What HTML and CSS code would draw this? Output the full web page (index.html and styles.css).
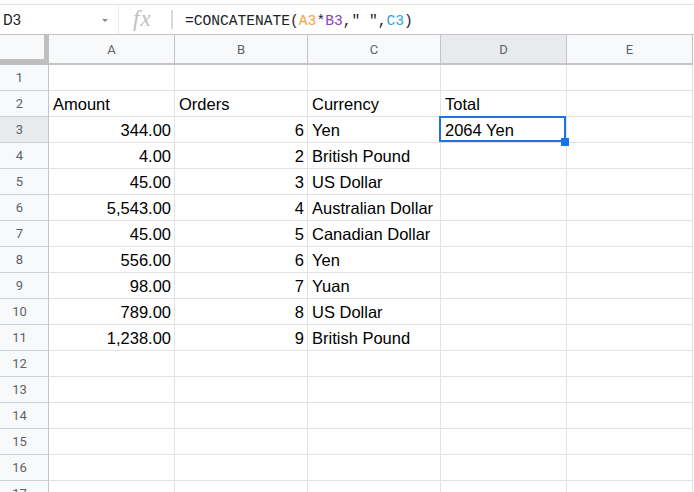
FILE: index.html
```html
<!DOCTYPE html>
<html>
<head>
<meta charset="utf-8">
<link rel="stylesheet" href="styles.css">
</head>
<body>
<div class="fbar">
  <div class="namebox"><span class="ref">D3</span><span class="caret"></span></div>
  <div class="fxbox"><span class="fx">fx</span></div>
  <div class="divider"></div>
  <div class="formula">=CONCATENATE(<span class="r1">A3</span>*<span class="r2">B3</span>," ",<span class="r3">C3</span>)</div>
</div>
<div class="sheet">
  <div class="row head">
    <div class="corner"></div>
    <div class="ch">A</div><div class="ch">B</div><div class="ch">C</div><div class="ch hl">D</div><div class="ch">E</div>
  </div>
  <div class="row"><div class="rh">1</div><div class="c"></div><div class="c"></div><div class="c"></div><div class="c"></div><div class="c"></div></div>
  <div class="row"><div class="rh">2</div><div class="c">Amount</div><div class="c">Orders</div><div class="c">Currency</div><div class="c">Total</div><div class="c"></div></div>
  <div class="row"><div class="rh hl">3</div><div class="c n">344.00</div><div class="c n">6</div><div class="c">Yen</div><div class="c sel">2064 Yen<span class="selbox"></span><span class="handle"></span></div><div class="c"></div></div>
  <div class="row"><div class="rh">4</div><div class="c n">4.00</div><div class="c n">2</div><div class="c">British Pound</div><div class="c"></div><div class="c"></div></div>
  <div class="row"><div class="rh">5</div><div class="c n">45.00</div><div class="c n">3</div><div class="c">US Dollar</div><div class="c"></div><div class="c"></div></div>
  <div class="row"><div class="rh">6</div><div class="c n">5,543.00</div><div class="c n">4</div><div class="c">Australian Dollar</div><div class="c"></div><div class="c"></div></div>
  <div class="row"><div class="rh">7</div><div class="c n">45.00</div><div class="c n">5</div><div class="c">Canadian Dollar</div><div class="c"></div><div class="c"></div></div>
  <div class="row"><div class="rh">8</div><div class="c n">556.00</div><div class="c n">6</div><div class="c">Yen</div><div class="c"></div><div class="c"></div></div>
  <div class="row"><div class="rh">9</div><div class="c n">98.00</div><div class="c n">7</div><div class="c">Yuan</div><div class="c"></div><div class="c"></div></div>
  <div class="row"><div class="rh">10</div><div class="c n">789.00</div><div class="c n">8</div><div class="c">US Dollar</div><div class="c"></div><div class="c"></div></div>
  <div class="row"><div class="rh">11</div><div class="c n">1,238.00</div><div class="c n">9</div><div class="c">British Pound</div><div class="c"></div><div class="c"></div></div>
  <div class="row"><div class="rh">12</div><div class="c"></div><div class="c"></div><div class="c"></div><div class="c"></div><div class="c"></div></div>
  <div class="row"><div class="rh">13</div><div class="c"></div><div class="c"></div><div class="c"></div><div class="c"></div><div class="c"></div></div>
  <div class="row"><div class="rh">14</div><div class="c"></div><div class="c"></div><div class="c"></div><div class="c"></div><div class="c"></div></div>
  <div class="row"><div class="rh">15</div><div class="c"></div><div class="c"></div><div class="c"></div><div class="c"></div><div class="c"></div></div>
  <div class="row"><div class="rh">16</div><div class="c"></div><div class="c"></div><div class="c"></div><div class="c"></div><div class="c"></div></div>
  <div class="row"><div class="rh">17</div><div class="c"></div><div class="c"></div><div class="c"></div><div class="c"></div><div class="c"></div></div>
</div>
</body>
</html>
```
FILE: styles.css
```css
html, body {
  margin: 0;
  padding: 0;
  background: #fff;
}
body {
  width: 694px;
  height: 492px;
  overflow: hidden;
}
.fbar {
  margin-top: 4px;
  border-top: 1px solid #e3e3e3;
  height: 29px;
  display: flex;
  align-items: stretch;
}
.namebox {
  width: 119px;
  border-right: 1px solid #ececec;
  display: flex;
  align-items: flex-start;
  justify-content: space-between;
  padding: 3px 10px 0 3px;
  box-sizing: border-box;
}
.ref {
  font-family: Roboto, "Liberation Sans", sans-serif;
  font-size: 15px;
  line-height: 24px;
  color: #202124;
}
.caret {
  margin-top: 11px;
  width: 0;
  height: 0;
  border-left: 3px solid transparent;
  border-right: 3px solid transparent;
  border-top: 3px solid #8a8a8a;
}
.fxbox {
  width: 52px;
  padding-left: 14px;
  box-sizing: border-box;
}
.fx {
  font-family: "Liberation Serif", serif;
  font-style: italic;
  font-size: 23px;
  letter-spacing: 1px;
  line-height: 28px;
  color: #c0c0c0;
}
.divider {
  width: 2px;
  height: 19px;
  margin-top: 5px;
  background: #dadada;
}
.formula {
  margin-left: 12px;
  padding-top: 3px;
  font-family: "Liberation Mono", "DejaVu Sans Mono", monospace;
  font-size: 14.6px;
  line-height: 26px;
  color: #202124;
  white-space: pre;
}
.r1 { color: #f4a446; }
.r2 { color: #8d3fb5; }
.r3 { color: #32a3da; }

.sheet {
  border-top: 1px solid #c4c4c4;
}
.row {
  display: grid;
  grid-template-columns: 49px 126px 133px 133px 126px 126px;
  grid-template-rows: 26px;
  height: 26px;
}
.row.head {
  grid-template-rows: 30px;
  height: 30px;
}
.corner {
  background: #f8f9fa;
  border-right: 5px solid #bfbfbf;
  border-bottom: 6px solid #bfbfbf;
}
.ch {
  background: #f8f9fa;
  border-right: 1px solid #c4c4c4;
  border-bottom: 2px solid #c4c4c4;
  font-family: Roboto, "Liberation Sans", sans-serif;
  font-size: 13px;
  line-height: 29px;
  color: #5f6368;
  text-align: center;
}
.hl {
  background: #e8eaed;
}
.rh {
  background: #f8f9fa;
  border-right: 1px solid #c4c4c4;
  border-bottom: 1px solid #cfcfcf;
  font-family: Roboto, "Liberation Sans", sans-serif;
  font-size: 13px;
  line-height: 25px;
  color: #5f6368;
  text-align: center;
  padding-right: 9px;
}
.rh.hl {
  background: #e8eaed;
}
.c {
  border-right: 1px solid #e2e2e2;
  border-bottom: 1px solid #e2e2e2;
  font-family: "Liberation Sans", Arial, sans-serif;
  font-size: 16.5px;
  line-height: 23px;
  color: #000;
  padding: 2px 3px 0 4px;
  white-space: nowrap;
  overflow: visible;
}
.c.n {
  text-align: right;
}
.sel {
  position: relative;
}
.selbox {
  position: absolute;
  top: -1px;
  left: -2px;
  right: 0;
  bottom: 0;
  border: 2px solid #1a73e8;
}
.handle {
  position: absolute;
  left: 120px;
  top: 21px;
  width: 8px;
  height: 8px;
  background: #1a73e8;
}
```
